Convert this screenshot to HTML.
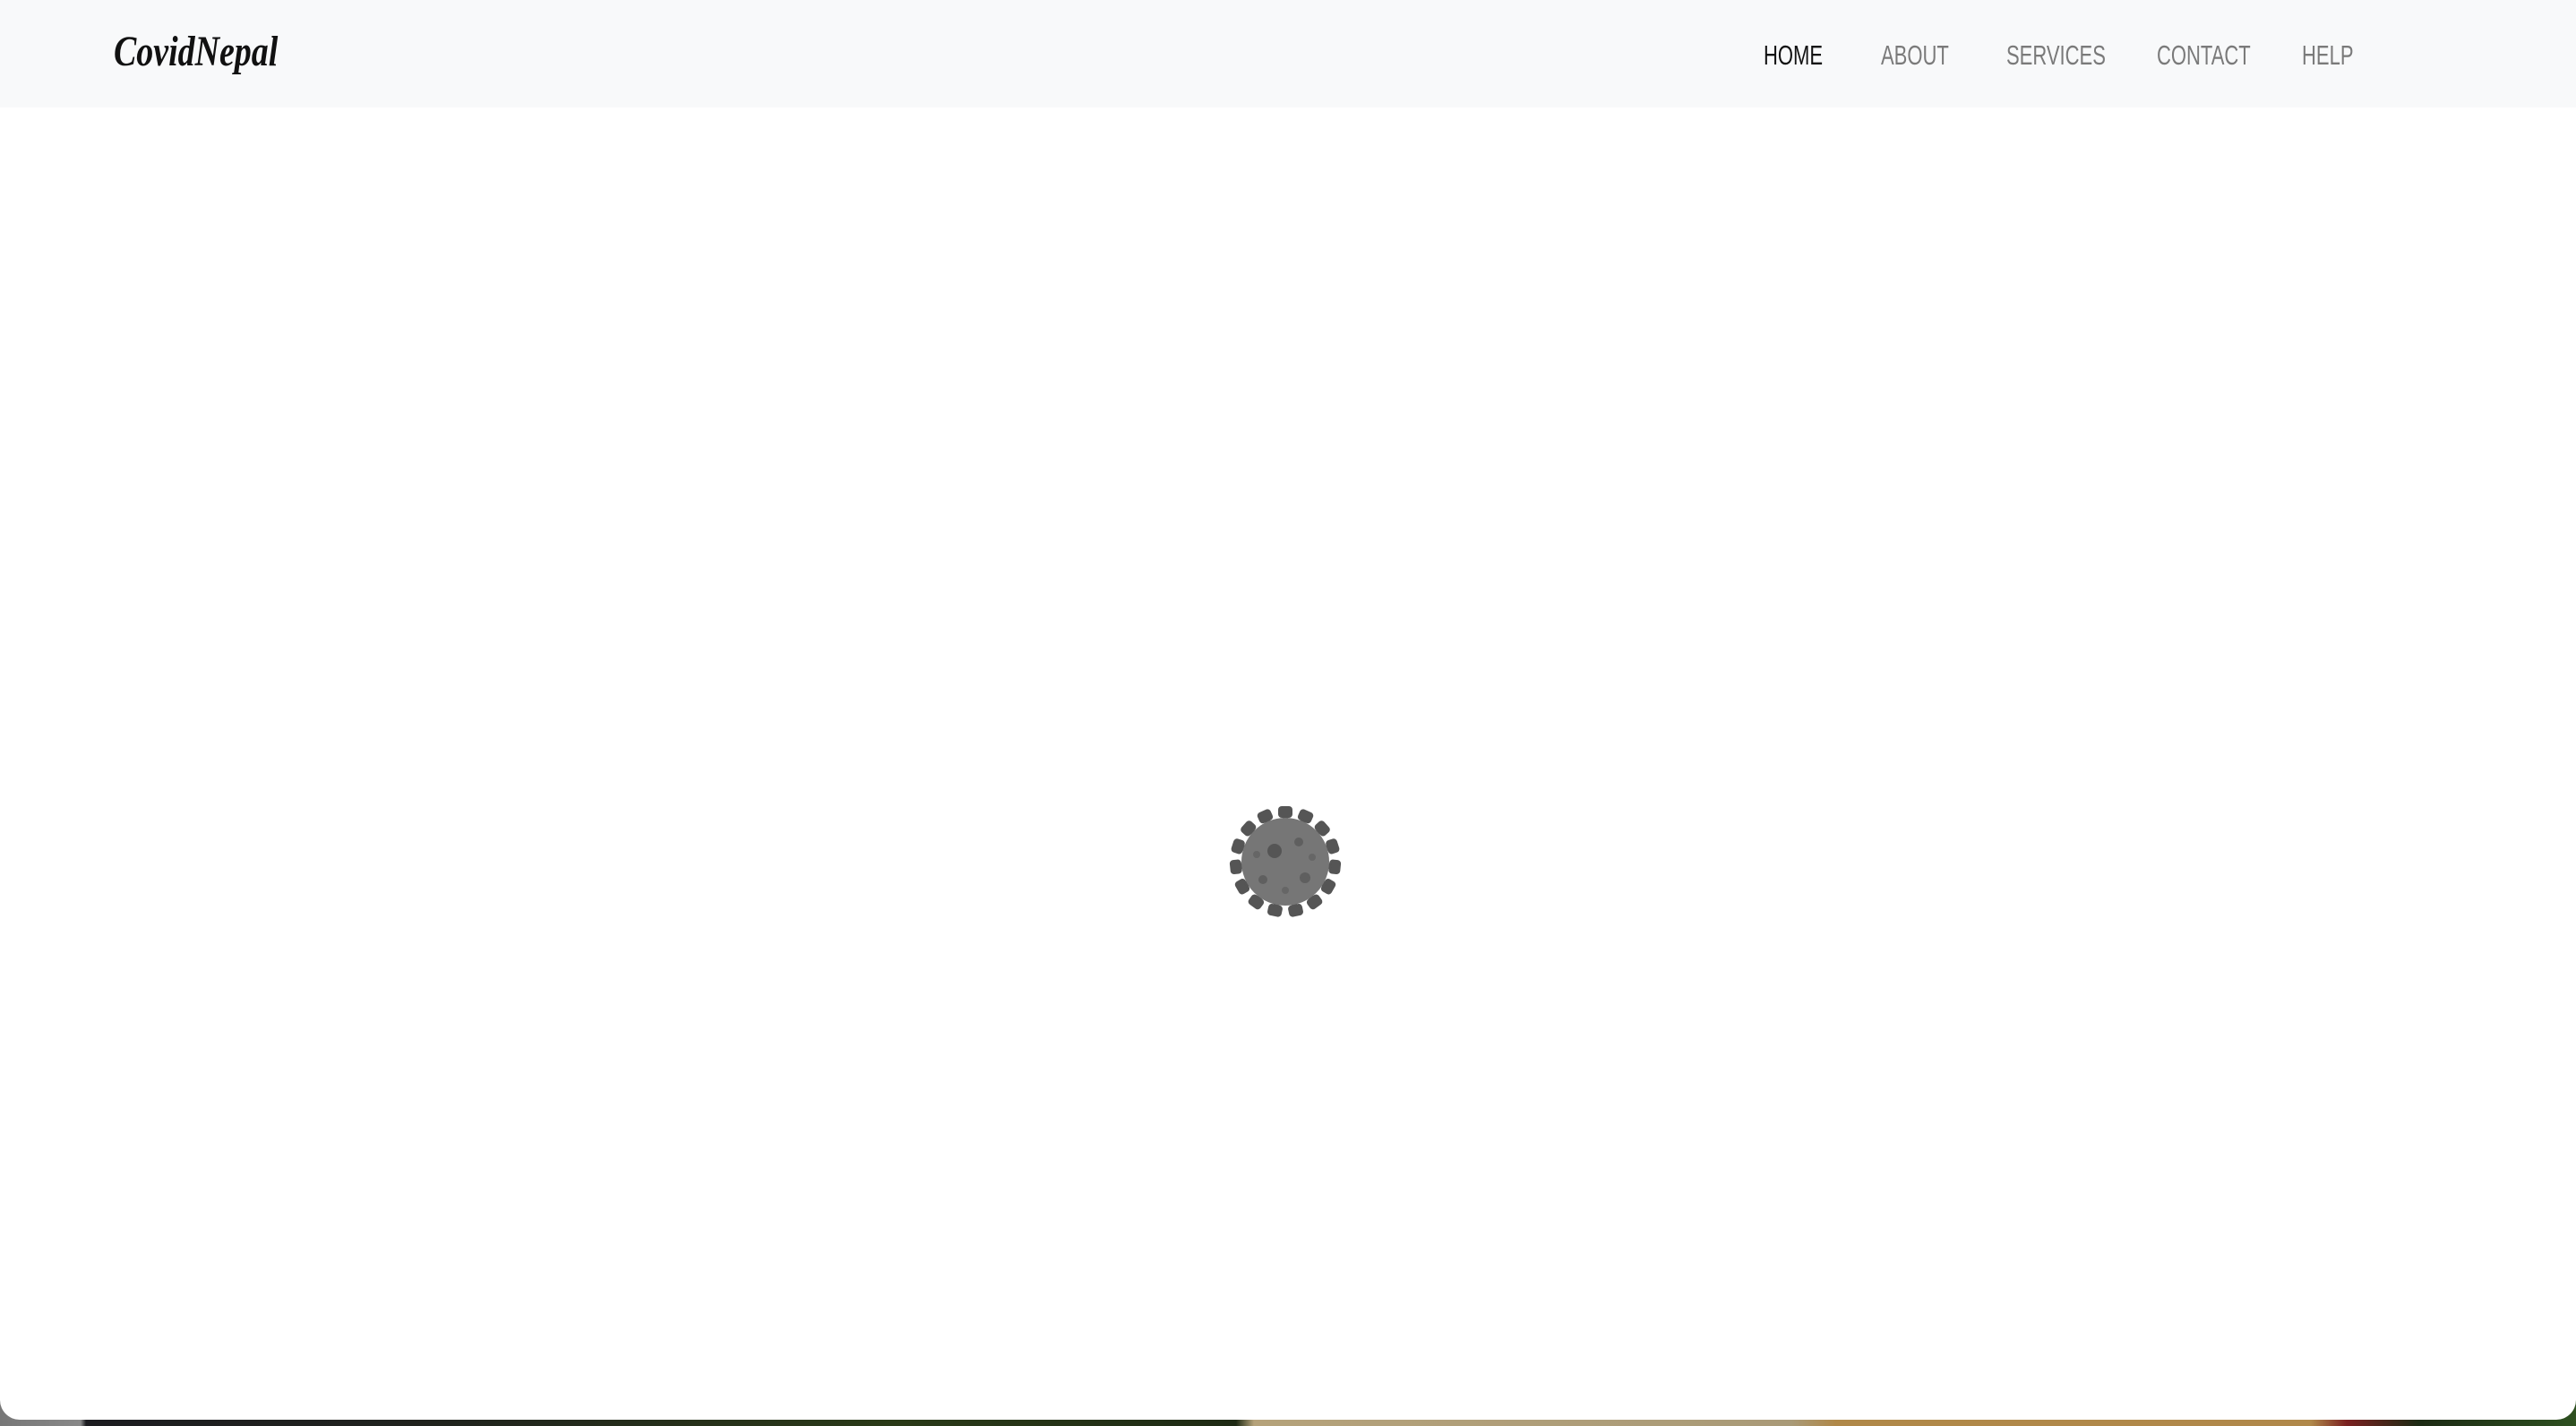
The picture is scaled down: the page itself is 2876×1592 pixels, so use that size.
<!DOCTYPE html>
<html><head><meta charset="utf-8"><style>
html,body{margin:0;padding:0;width:2876px;height:1592px;overflow:hidden;background:#fff;font-family:"Liberation Sans",sans-serif}
.strip{position:absolute;left:0;top:1560px;width:2876px;height:32px;background:linear-gradient(90deg,#777 0,#888 90px,#1c1c20 96px,#20231d 500px,#2a3a18 1000px,#1e2a14 1380px,#b5a27a 1400px,#a99a78 2000px,#b08848 2050px,#b0884a 2580px,#7a2020 2620px,#1c2a14 2700px,#2e5020 2876px)}
.main{position:absolute;left:0;top:0;width:2876px;height:1585px;background:#fff;border-radius:0 0 22px 22px}
.nav{position:absolute;left:0;top:0;width:2876px;height:120px;background:#f8f9fa}
.logo{position:absolute;left:127px;top:30px;font-family:"Liberation Serif",serif;font-style:italic;font-weight:bold;font-size:48px;color:#111;transform:scaleX(0.79);transform-origin:left top;white-space:nowrap}
.ni{position:absolute;top:44px;font-size:31px;color:#7a7a7a;transform:scaleX(0.71);transform-origin:left top;white-space:nowrap;line-height:36px}
</style></head><body>
<div class="strip"></div>
<div class="main">
<div class="nav">
<div class="logo">CovidNepal</div>
<div class="ni" style="left:1969px;color:#111">HOME</div>
<div class="ni" style="left:2100px">ABOUT</div>
<div class="ni" style="left:2240px">SERVICES</div>
<div class="ni" style="left:2408px">CONTACT</div>
<div class="ni" style="left:2570px">HELP</div>
</div>
<svg style="position:absolute;left:1370px;top:897px" width="130" height="130" viewBox="-65 -65 130 130">
<g fill="#555">
<g id="s"><rect x="-8" y="-62" width="16" height="13" rx="4"/><rect x="-3" y="-52" width="6" height="10"/></g>
<use href="#s" transform="rotate(24)"/><use href="#s" transform="rotate(48)"/><use href="#s" transform="rotate(72)"/><use href="#s" transform="rotate(96)"/><use href="#s" transform="rotate(120)"/><use href="#s" transform="rotate(144)"/><use href="#s" transform="rotate(168)"/><use href="#s" transform="rotate(192)"/><use href="#s" transform="rotate(216)"/><use href="#s" transform="rotate(240)"/><use href="#s" transform="rotate(264)"/><use href="#s" transform="rotate(288)"/><use href="#s" transform="rotate(312)"/><use href="#s" transform="rotate(336)"/>
</g>
<circle r="49" fill="#767676"/>
<circle cx="-12" cy="-12" r="8" fill="#555"/>
<circle cx="15" cy="-22" r="5" fill="#5f5f5f"/><circle cx="-25" cy="20" r="5" fill="#5f5f5f"/><circle cx="22" cy="18" r="6" fill="#5f5f5f"/>
<circle cx="30" cy="-5" r="4" fill="#666"/><circle cx="-32" cy="-8" r="4" fill="#666"/><circle cx="0" cy="32" r="4" fill="#666"/>
</svg>
</div>
</body></html>
